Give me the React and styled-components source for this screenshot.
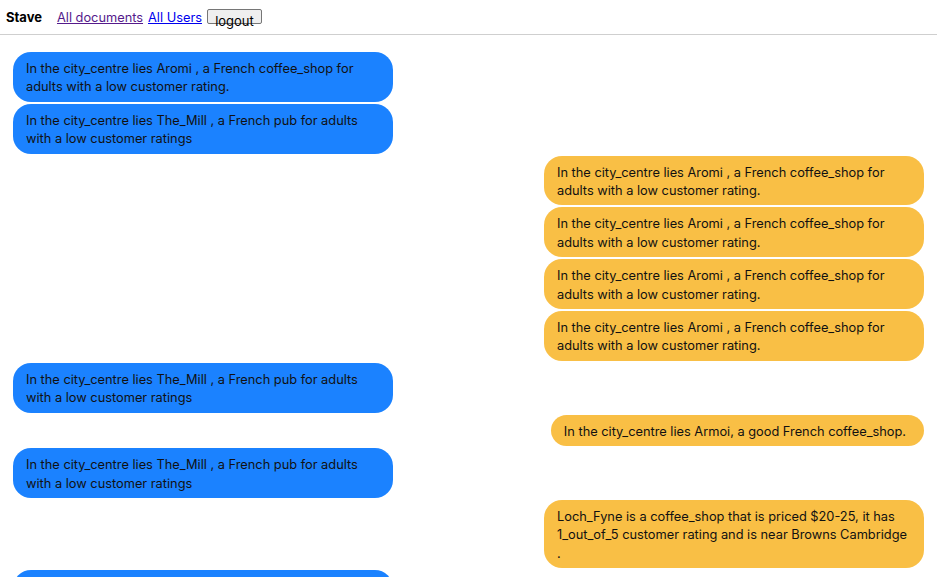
import React from "react";
import styled, { createGlobalStyle } from "styled-components";

const GlobalStyle = createGlobalStyle`
  html, body {
    margin: 0;
    padding: 0;
    background: #fff;
    font-family: "Inter", "Noto Sans", sans-serif;
  }
`;

const Header = styled.div`
  display: flex;
  align-items: center;
  height: 34px;
  padding: 0 6px;
  border-bottom: 1px solid #cfcfcf;
  font-size: 13px;
`;

const Brand = styled.span`
  font-weight: 700;
  color: #000;
  margin-right: 15px;
`;

const NavLink = styled.a`
  color: ${(p) => (p.$visited ? "#551a8b" : "#0000ee")};
  text-decoration: underline;
  margin-right: 5px;
  font-size: 12.8px;
  cursor: pointer;
`;

const LogoutButton = styled.button`
  box-sizing: border-box;
  width: 55px;
  height: 15px;
  margin-top: -2px;
  padding: 2px 6px 0;
  font-family: inherit;
  font-size: 13px;
  line-height: 18px;
  color: #000;
  background: #efefef;
  border: 1px solid #767676;
  border-radius: 2px;
  overflow: visible;
  display: flex;
  align-items: flex-start;
  justify-content: center;
`;

const Thread = styled.div`
  display: flex;
  flex-direction: column;
  gap: 2px;
  padding: 17px 13px 0;
`;

const Row = styled.div`
  display: flex;
  justify-content: ${(p) => (p.$mine ? "flex-end" : "flex-start")};
`;

const Bubble = styled.div`
  box-sizing: border-box;
  max-width: 380px;
  width: ${(p) => (p.$fit ? "auto" : "380px")};
  padding: 8px ${(p) => (p.$fit ? "18px" : "13px")} 5px 13px;
  border-radius: 18px;
  font-size: 12.8px;
  line-height: 18.4px;
  color: #111;
  background: ${(p) => (p.$mine ? "#f9bf45" : "#1b82ff")};
`;

const aromi =
  "In the city_centre lies Aromi , a French coffee_shop for adults with a low customer rating.";
const mill =
  "In the city_centre lies The_Mill , a French pub for adults with a low customer ratings";

const messages = [
  { mine: false, text: aromi },
  { mine: false, text: mill },
  { mine: true, text: aromi },
  { mine: true, text: aromi },
  { mine: true, text: aromi },
  { mine: true, text: aromi },
  { mine: false, text: mill },
  { mine: true, fit: true, text: "In the city_centre lies Armoi, a good French coffee_shop." },
  { mine: false, text: mill },
  {
    mine: true,
    text: "Loch_Fyne is a coffee_shop that is priced $20-25, it has 1_out_of_5 customer rating and is near Browns Cambridge .",
  },
  { mine: false, text: mill },
];

export default function App() {
  return (
    <>
      <GlobalStyle />
      <Header>
        <Brand>Stave</Brand>
        <NavLink $visited>All documents</NavLink>
        <NavLink>All Users</NavLink>
        <LogoutButton>logout</LogoutButton>
      </Header>
      <Thread>
        {messages.map((m, i) => (
          <Row key={i} $mine={m.mine}>
            <Bubble $mine={m.mine} $fit={m.fit}>
              {m.text}
            </Bubble>
          </Row>
        ))}
      </Thread>
    </>
  );
}
